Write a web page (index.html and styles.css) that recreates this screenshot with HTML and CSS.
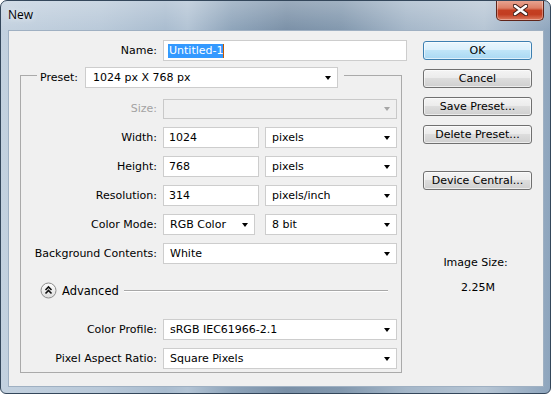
FILE: index.html
```html
<!DOCTYPE html>
<html lang="en">
<head>
    <meta charset="UTF-8">
    <meta name="viewport" content="width=device-width, initial-scale=1.0">
    <title>New</title>
    <link rel="stylesheet" href="styles.css">
</head>
<body>
    <div class="window">
        <div class="titlebar">
            <span class="title">New</span>
            <button class="close" aria-label="Close">
                <svg width="15" height="12" viewBox="0 0 15 12">
                    <path d="M2 2 L13 10 M2 10 L13 2" stroke="#3d1e18" stroke-width="4.6" stroke-linecap="round"/>
                    <path d="M2 2 L13 10 M2 10 L13 2" stroke="#fff" stroke-width="2.6" stroke-linecap="round"/>
                </svg>
            </button>
        </div>

        <div class="panel">
            <div class="form">
                <div class="row name-row">
                    <span class="lbl name-lbl">Name:</span>
                    <div class="field name-field"><span class="selected">Untitled-1</span></div>
                </div>

                <fieldset class="group">
                    <legend class="preset">
                        <span class="preset-lbl">Preset:</span>
                        <div class="combo preset-combo">1024 px X 768 px<span class="caret"></span></div>
                    </legend>

                    <div class="row">
                        <span class="lbl disabled">Size:</span>
                        <div class="combo full off"><span class="caret"></span></div>
                    </div>
                    <div class="row">
                        <span class="lbl">Width:</span>
                        <div class="field num">1024</div>
                        <div class="combo unit">pixels<span class="caret"></span></div>
                    </div>
                    <div class="row">
                        <span class="lbl">Height:</span>
                        <div class="field num">768</div>
                        <div class="combo unit">pixels<span class="caret"></span></div>
                    </div>
                    <div class="row">
                        <span class="lbl">Resolution:</span>
                        <div class="field num">314</div>
                        <div class="combo unit">pixels/inch<span class="caret"></span></div>
                    </div>
                    <div class="row">
                        <span class="lbl">Color Mode:</span>
                        <div class="combo mode">RGB Color<span class="caret"></span></div>
                        <div class="combo unit">8 bit<span class="caret"></span></div>
                    </div>
                    <div class="row">
                        <span class="lbl">Background Contents:</span>
                        <div class="combo full">White<span class="caret"></span></div>
                    </div>

                    <div class="advanced">
                        <svg class="toggle" width="17" height="17" viewBox="0 0 17 17">
                            <defs>
                                <linearGradient id="tg" x1="0" y1="0" x2="0" y2="1">
                                    <stop offset="0" stop-color="#ffffff"/>
                                    <stop offset="1" stop-color="#dcdcdc"/>
                                </linearGradient>
                            </defs>
                            <circle cx="8.5" cy="8.5" r="7.5" fill="url(#tg)" stroke="#8c8c8c"/>
                            <path d="M5.5 8 L8.5 5 L11.5 8 M5.5 11.5 L8.5 8.5 L11.5 11.5" fill="none" stroke="#111" stroke-width="1.6"/>
                        </svg>
                        <span class="adv-text">Advanced</span>
                        <span class="rule"></span>
                    </div>

                    <div class="row">
                        <span class="lbl">Color Profile:</span>
                        <div class="combo full">sRGB IEC61966-2.1<span class="caret"></span></div>
                    </div>
                    <div class="row">
                        <span class="lbl">Pixel Aspect Ratio:</span>
                        <div class="combo full">Square Pixels<span class="caret"></span></div>
                    </div>
                </fieldset>
            </div>

            <div class="side">
                <button class="btn default">OK</button>
                <button class="btn">Cancel</button>
                <button class="btn">Save Preset...</button>
                <button class="btn">Delete Preset...</button>
                <button class="btn device">Device Central...</button>

                <div class="image-size">
                    <div>Image Size:</div>
                    <div class="size-value">2.25M</div>
                </div>
            </div>
        </div>
    </div>
</body>
</html>
```

FILE: styles.css
```css
* {
    box-sizing: border-box;
}
body {
    margin: 0;
    width: 551px;
    height: 394px;
    background: #ffffff;
    font-family: "DejaVu Sans", Verdana, sans-serif;
    font-size: 11px;
    color: #000;
}
.window {
    width: 551px;
    height: 394px;
    border: 1px solid #34475b;
    border-radius: 7px 7px 6px 6px;
    display: flex;
    flex-direction: column;
    overflow: hidden;
    background:
        linear-gradient(180deg, rgba(255, 255, 255, 0.25), rgba(255, 255, 255, 0) 30px),
        linear-gradient(90deg, #c3d1df 0%, #b9c9d9 18%, #a9bccf 30%, #b2c3d4 34%, #8ea4ba 42%, #7a90a7 52%, #8298ae 62%, #a5b7c9 74%, #b6c5d4 88%, #8ea5bd 100%);
}
.titlebar {
    height: 29px;
    display: flex;
    align-items: flex-start;
}
.title {
    font-family: "Open Sans", "Noto Sans", sans-serif;
    font-size: 12px;
    line-height: 16px;
    padding: 6px 0 0 7px;
    color: #000;
    text-shadow: 0 0 6px rgba(255, 255, 255, 0.9);
}
.close {
    margin: -1px 6px 0 auto;
    width: 48px;
    height: 21px;
    padding: 0;
    border: 1px solid #5f2419;
    border-top: none;
    border-radius: 0 0 5px 5px;
    background: linear-gradient(180deg, #e8a896 0%, #dc7f66 40%, #c43f22 52%, #c23d21 72%, #dc7a5e 100%);
    box-shadow: inset 0 0 0 1px rgba(255, 255, 255, 0.35);
    display: flex;
    align-items: center;
    justify-content: center;
}
.panel {
    flex: 1;
    margin: 0 6px 6px 7px;
    border: 1px solid #9fb0c2;
    background: #f0f0f0;
    display: flex;
    gap: 16px;
    padding: 9px 10px 0 11px;
}
.form {
    width: 387px;
}
.row {
    display: flex;
    align-items: center;
    height: 21px;
}
.lbl {
    width: 136px;
    margin-right: 6px;
    text-align: right;
    white-space: nowrap;
}
.name-lbl {
    width: 137px;
}
.disabled {
    color: #a3a3a3;
}
.field,
.combo {
    height: 21px;
    background: #fff;
    border: 1px solid #cdcdcd;
    display: flex;
    align-items: center;
    white-space: nowrap;
}
.field {
    padding: 0 5px;
}
.combo {
    padding: 0 6px;
}
.name-field {
    width: 244px;
    padding-left: 4px;
}
.selected {
    background: #3399ff;
    color: #fff;
    line-height: 14px;
    border-right: 1px solid #c45a00;
    padding-left: 1px;
}
.caret {
    margin-left: auto;
    width: 0;
    height: 0;
    border-left: 3.5px solid transparent;
    border-right: 3.5px solid transparent;
    border-top: 4px solid #000;
}
.off {
    background: #f0f0f0;
    border-color: #c9c9c9;
    height: 20px;
}
.off .caret {
    border-top-color: #a6a6a6;
}
.full {
    width: 234px;
}
.num {
    width: 96px;
    margin-right: 6px;
}
.unit {
    width: 132px;
}
.mode {
    width: 92px;
    margin-right: 10px;
}
.group {
    margin: 1px 0 0 0;
    width: 382px;
    border: 1px solid #aaaaaa;
    padding: 10px 3px 3px 0;
    display: flex;
    flex-direction: column;
    gap: 8px;
}
.preset {
    margin-left: 16px;
    padding: 5px 6px 0 3px;
    display: flex;
    align-items: center;
}
.preset-lbl {
    width: 45px;
}
.preset-combo {
    width: 253px;
    padding-left: 7px;
}
.advanced {
    display: flex;
    align-items: center;
    height: 17px;
    margin: 10px 0 12px 0;
    padding-left: 19px;
}
.toggle {
    display: block;
}
.adv-text {
    margin-left: 5px;
    font-size: 11.5px;
}
.rule {
    flex: 1;
    height: 1px;
    background: #a8a8a8;
    box-shadow: 0 1px 0 #ffffff;
    margin: 0 10px 0 5px;
}
.side {
    width: 109px;
    padding-top: 1px;
    display: flex;
    flex-direction: column;
    gap: 9px;
}
.btn {
    height: 19px;
    padding: 0;
    font-family: "DejaVu Sans", Verdana, sans-serif;
    font-size: 11px;
    color: #000;
    border: 1px solid #707070;
    border-radius: 3px;
    background: linear-gradient(180deg, #f4f4f4 0%, #ececec 45%, #dddddd 50%, #cfcfcf 100%);
    box-shadow: inset 0 0 0 1px rgba(255, 255, 255, 0.6);
}
.default {
    border-color: #3c7fb1;
    background: linear-gradient(180deg, #e9f6fd 0%, #dbf0fc 45%, #bfe4f8 50%, #a9d8f3 100%);
}
.device {
    margin-top: 18px;
}
.image-size {
    margin-top: 57px;
    text-align: center;
    line-height: 14px;
    padding-right: 4px;
}
.size-value {
    margin-top: 11px;
    padding-left: 5px;
}
```
